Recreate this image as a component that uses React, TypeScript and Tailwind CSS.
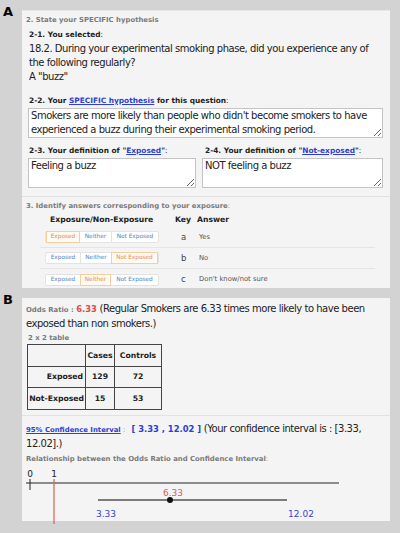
import React from 'react';

// segmented Exposed / Neither / Not Exposed picker, one segment selected
function Picker({ active }: { active: 0 | 1 | 2 }) {
  const labels = ['Exposed', 'Neither', 'Not Exposed'];
  const widths = ['w-[34px]', 'w-[31px]', 'w-[47px]'];
  return (
    <div className="flex h-[12px] w-max rounded-[2px] border border-[#e3e3e3] bg-white">
      {labels.map((label, i) => (
        <div
          key={label}
          className={`${widths[i]} flex items-center justify-center text-[5.8px] leading-none ${
            i === active
              ? '-my-px border border-[#f3cfa6] bg-[#fffaf2] text-[#e58a4e]'
              : 'text-[#4b86bf]'
          } ${i > 0 && i !== active && i - 1 !== active ? 'border-l border-[#e3e3e3]' : ''}`}
        >
          {label}
        </div>
      ))}
    </div>
  );
}

const answers = [
  { key: 'a', text: 'Yes', active: 0 as const },
  { key: 'b', text: 'No', active: 2 as const },
  { key: 'c', text: "Don't know/not sure", active: 1 as const },
];

export default function App() {
  const body = "font-['DejaVu_Sans',sans-serif]";
  const label = 'text-[7.4px] font-bold leading-[14px] text-[#222]';
  const small = 'text-[6.9px] font-bold text-[#7a7a7a]';
  const text = 'text-[10px] tracking-[-0.47px] leading-[14px] text-[#222]';

  return (
    <div className={`${body} relative h-[533px] w-[400px] overflow-hidden bg-[#d3d3d3]`}>
      {/* Panel A */}
      <div className="flex">
        <div className="w-[22px] pl-[3px] pt-[3px] text-[13px] font-bold leading-[18px] text-black">A</div>
        <div className="mt-[10px] h-[278px] w-[368px] border-t border-[#e6e6e6] bg-[#f4f4f4]">
          <div className={`${small} h-[17px] pl-[4px] pt-[4px] leading-[10px]`}>2. State your SPECIFIC hypothesis</div>

          <div className="pl-[7px] pr-[6px]">
            <div className={label}>
              2-1. You selected<span className="font-normal">:</span>
            </div>
            <div className={text}>
              18.2. During your experimental smoking phase, did you experience any of
              <br />
              the following regularly?
              <br />A "buzz"
            </div>

            <div className={`${label} mt-[10px]`}>
              2-2. Your <span className="text-[#2d3ed6] underline">SPECIFIC hypothesis</span> for this question
              <span className="font-normal">:</span>
            </div>
            <textarea
              readOnly
              defaultValue="Smokers are more likely than people who didn't become smokers to have experienced a buzz during their experimental smoking period."
              className={`${text} -ml-[1px] block h-[30px] w-[355px] resize overflow-hidden border border-[#c4c4c4] bg-white px-[2px] py-0 outline-none`}
            />

            <div className="mt-[6px] flex gap-[6px]">
              <div className="w-[167px]">
                <div className={label}>
                  2-3. Your definition of "<span className="text-[#2d3ed6] underline">Exposed</span>"
                  <span className="font-normal">:</span>
                </div>
                <textarea
                  readOnly
                  defaultValue="Feeling a buzz"
                  className={`${text} -ml-[1px] block h-[30px] w-[168px] resize overflow-hidden border border-[#c4c4c4] bg-white px-[2px] py-0 outline-none`}
                />
              </div>
              <div className="w-[181px] pl-[3px]">
                <div className={label}>
                  2-4. Your definition of "<span className="text-[#2d3ed6] underline">Not-exposed</span>"
                  <span className="font-normal">:</span>
                </div>
                <textarea
                  readOnly
                  defaultValue="NOT feeling a buzz"
                  className={`${text} -ml-[3px] block h-[30px] w-[181px] resize overflow-hidden border border-[#c4c4c4] bg-white px-[2px] py-0 outline-none`}
                />
              </div>
            </div>
          </div>

          <div className="mt-[8px] border-t border-[#e2e2e2]" />
          <div className={`${small} h-[16px] pl-[4px] pt-[4px] leading-[10px]`}>
            3. Identify answers corresponding to your exposure<span className="font-normal">:</span>
          </div>

          <div className="pl-[18px] pr-[15px]">
            <div className="flex h-[14px] items-center text-[7.7px] font-bold text-[#222]">
              <div className="w-[135px] pl-[10px]">Exposure/Non-Exposure</div>
              <div className="w-[22px]">Key</div>
              <div>Answer</div>
            </div>
            {answers.map((a, i) => (
              <div
                key={a.key}
                className={`flex h-[21px] items-center ${i < 2 ? 'border-b border-[#e4e4e4]' : ''}`}
              >
                <div className="w-[141px] pl-[5px]">
                  <Picker active={a.active} />
                </div>
                <div className="w-[18px] text-[8.5px] text-[#444]">{a.key}</div>
                <div className="text-[6.8px] text-[#555]">{a.text}</div>
              </div>
            ))}
          </div>
        </div>
      </div>

      {/* Panel B */}
      <div className="flex">
        <div className="w-[22px] pl-[3px] pt-[3px] text-[13px] font-bold leading-[18px] text-black">B</div>
        <div className="mt-[10px] h-[223px] w-[368px] bg-[#f4f4f4] pl-[4px]">
          <div className={`${text} pt-[4px]`}>
            <span className="text-[6.9px] font-bold tracking-normal text-[#7a7a7a]">Odds Ratio : </span>
            <span className="text-[8.4px] font-bold tracking-normal text-[#e04848]">6.33</span> (Regular Smokers are 6.33
            times more likely to have been
            <br />
            exposed than non smokers.)
          </div>
          <div className={`${small} h-[13px] pl-[2px] pt-[2px] leading-[10px]`}>2 x 2 table</div>

          <table className="ml-[1px] border-collapse whitespace-nowrap border border-[#333] text-[7.7px] font-bold text-[#222]">
            <tbody>
              <tr className="h-[22px]">
                <td className="w-[58px] border border-[#444] p-0" />
                <td className="w-[29px] border border-[#444] p-0 text-center">Cases</td>
                <td className="w-[47px] border border-[#444] p-0 text-center">Controls</td>
              </tr>
              <tr className="h-[21px]">
                <td className="border border-[#444] p-0 pr-[2px] text-right">Exposed</td>
                <td className="border border-[#444] p-0 text-center">129</td>
                <td className="border border-[#444] p-0 text-center">72</td>
              </tr>
              <tr className="h-[22px]">
                <td className="border border-[#444] p-0 pr-[1px] text-right">Not-Exposed</td>
                <td className="border border-[#444] p-0 text-center">15</td>
                <td className="border border-[#444] p-0 text-center">53</td>
              </tr>
            </tbody>
          </table>

          <div className="-ml-[4px] mt-[5px] border-t border-[#e2e2e2]" />
          <div className={`${text} pt-[6px]`}>
            <span className="text-[6.9px] font-bold tracking-normal text-[#2d3ed6] underline">95% Confidence Interval</span>
            <span className="text-[6.9px] tracking-normal text-[#7a7a7a]"> : </span>
            <span className="ml-[4px] text-[8.4px] font-bold tracking-normal text-[#2d3ed6]">[ 3.33 , 12.02 ]</span> (Your
            confidence interval is : [3.33,
            <br />
            12.02].)
          </div>
          <div className={`${small} h-[13px] pt-[3px] leading-[10px]`}>
            Relationship between the Odds Ratio and Confidence Interval<span className="font-normal">:</span>
          </div>

          <svg width="368" height="60" className="-ml-[4px] block overflow-visible">
            <text x="8" y="13" fontSize="9" fill="#222" textAnchor="middle">0</text>
            <text x="32" y="13" fontSize="9" fill="#222" textAnchor="middle">1</text>
            <line x1="4" y1="19" x2="317" y2="19" stroke="#222" strokeWidth="1.2" />
            <line x1="8" y1="15" x2="8" y2="26" stroke="#222" strokeWidth="1" />
            <line x1="32" y1="15" x2="32" y2="60" stroke="#d9614c" strokeWidth="1.2" />
            <line x1="76" y1="36" x2="265" y2="36" stroke="#555" strokeWidth="1.4" />
            <circle cx="148" cy="36" r="3" fill="#111" />
            <text x="151" y="31.5" fontSize="9" fill="#e05a50" textAnchor="middle">6.33</text>
            <text x="84" y="53" fontSize="9" fill="#3b45d6" textAnchor="middle">3.33</text>
            <text x="279" y="53" fontSize="9" fill="#3b45d6" textAnchor="middle">12.02</text>
          </svg>
        </div>
      </div>
    </div>
  );
}
